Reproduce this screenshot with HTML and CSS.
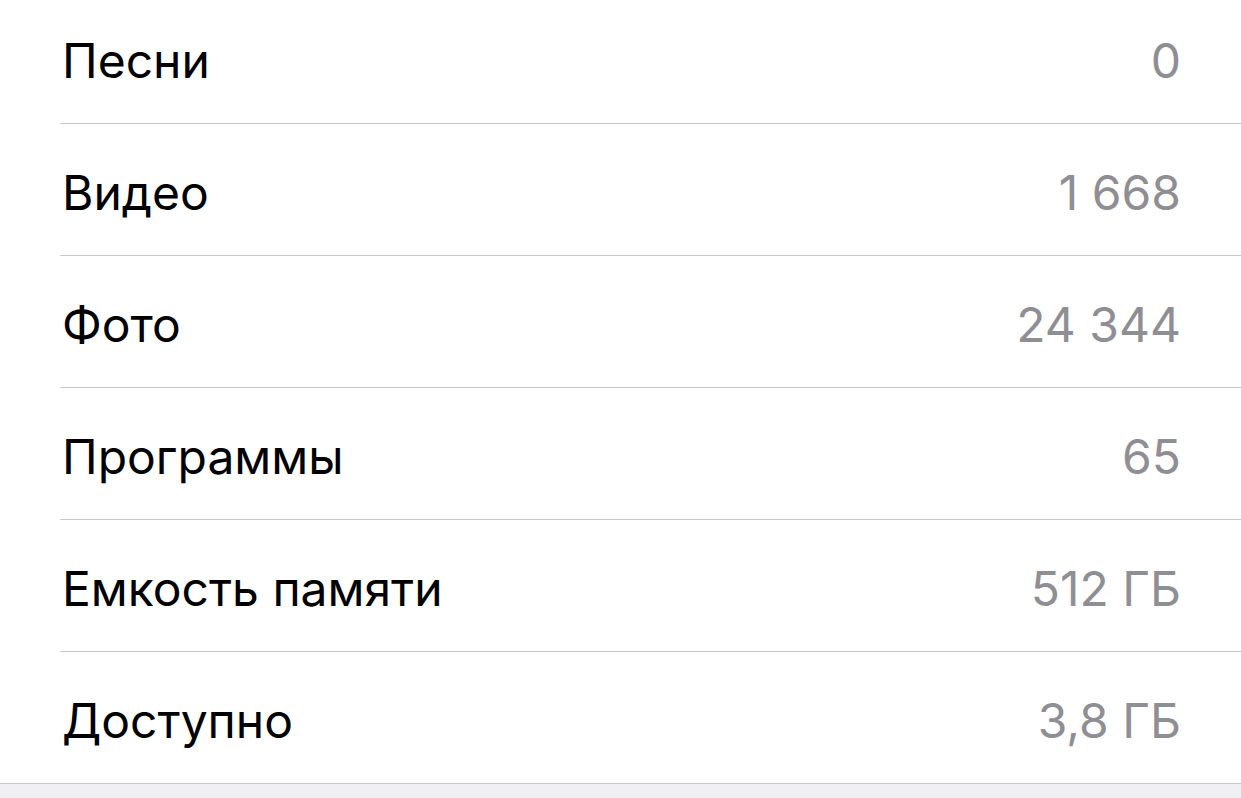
FILE: index.html
```html
<!DOCTYPE html>
<html lang="ru">
<head>
    <meta charset="utf-8" />
    <title>Об этом устройстве</title>
    <link rel="stylesheet" href="styles.css">
</head>
<body>
    <div class="list">
        <div class="row">
            <span class="label">Песни</span>
            <span class="value">0</span>
        </div>
        <div class="row">
            <span class="label">Видео</span>
            <span class="value">1 668</span>
        </div>
        <div class="row">
            <span class="label">Фото</span>
            <span class="value">24 344</span>
        </div>
        <div class="row">
            <span class="label">Программы</span>
            <span class="value">65</span>
        </div>
        <div class="row">
            <span class="label">Емкость памяти</span>
            <span class="value">512 ГБ</span>
        </div>
        <div class="row last">
            <span class="label">Доступно</span>
            <span class="value">3,8 ГБ</span>
        </div>
    </div>
</body>
</html>
```

FILE: styles.css
```css
body {
    margin: 0;
    height: 100vh;
    overflow: hidden;
    background: #efeff4;
    font-family: Inter, "Liberation Sans", Arial, sans-serif;
}

.list {
    margin-top: -8px;
    background: #fff;
    padding-left: 60px;
}

.row {
    display: flex;
    justify-content: space-between;
    align-items: center;
    box-sizing: border-box;
    height: 132px;
    padding: 5px 60px 0 2px;
    border-bottom: 1px solid #c8c7cc;
    font-size: 48px;
}

.row.last {
    margin-left: -60px;
    padding-left: 62px;
}

.label {
    color: #000;
}

.value {
    color: #8e8e93;
}
```
